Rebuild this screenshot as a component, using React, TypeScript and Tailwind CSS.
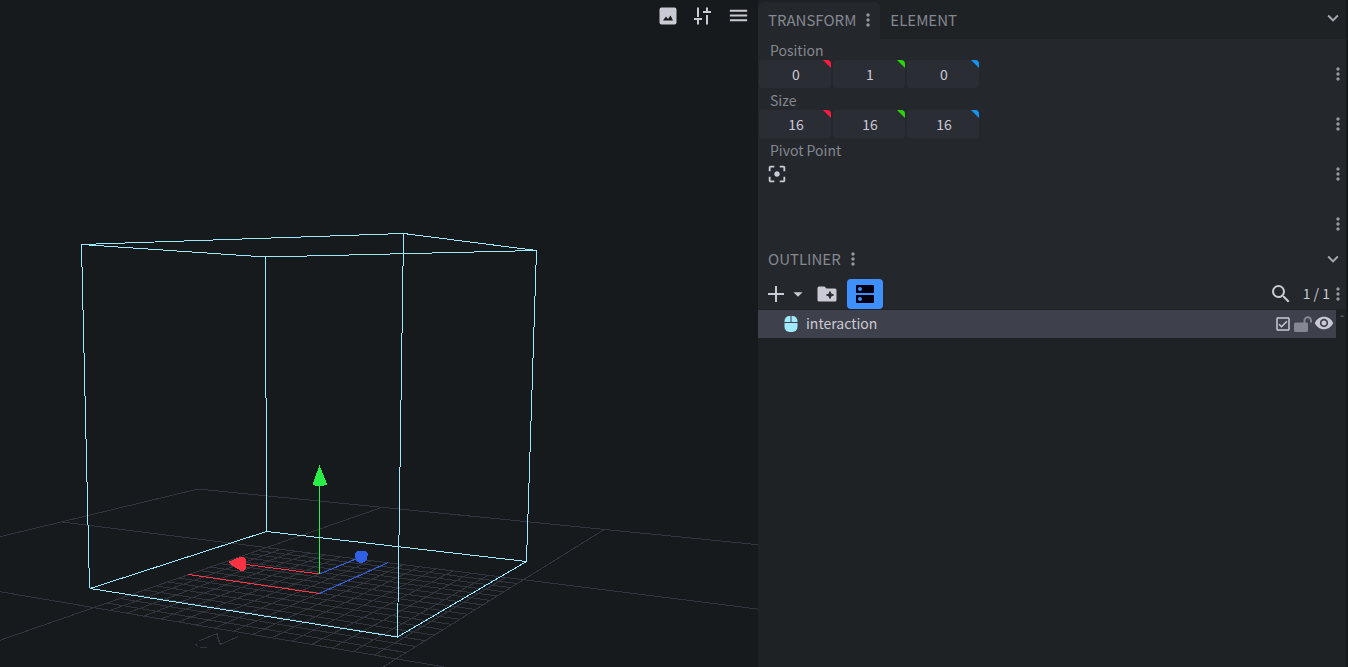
import { useState } from "react";
import type { ReactNode } from "react";
import {
  MdArrowDropDown,
  MdArrowDropUp,
  MdDns,
  MdFilterCenterFocus,
  MdMenu,
  MdMoreVert,
  MdOutlineCheckBox,
  MdSearch,
  MdVisibility,
  MdExpandMore,
} from "react-icons/md";

type Point = [number, number];

/* Projects ground coordinates on screen: one unit is one 16x16 block,
   with the centre block running from 0 to 1 on both axes. */
const A = 302.2, B = -291.7, D = -50.9, E = -91.3, G = -0.1725, H = -0.3011;
function project(u: number, v: number): Point {
  const s = (u + 1) / 2;
  const t = (v + 1) / 2;
  const w = 1 + G * s + H * t;
  return [(198 + A * s + B * t) / w, (489 + D * s + E * t) / w];
}

function line(a: Point, b: Point) {
  const r = a.concat(b).map((n) => Math.round(n * 10) / 10);
  return `M${r[0]} ${r[1]}L${r[2]} ${r[3]}`;
}

const steps = Array.from({ length: 17 }, (_, i) => i / 16);
const fineGrid = steps
  .map((k) => line(project(k, 0), project(k, 1)) + line(project(0, k), project(1, k)))
  .join("");
const blockGrid = [-1, 0, 1, 2]
  .map((k) => line(project(k, -1), project(k, 2)) + line(project(-1, k), project(2, k)))
  .join("");

function Viewport() {
  return (
    <svg
      viewBox="0 0 758 667"
      preserveAspectRatio="xMidYMid slice"
      className="block h-full w-full"
      fill="none"
      shapeRendering="crispEdges"
      role="img"
      aria-label="3D preview"
    >
      <g stroke="#33353e">
        <path d={blockGrid} />
        <path d={fineGrid} />
        <path d="M199 641L217 633.5L220.500 644.500L238 636.500M216.500 633.500L219.500 644M195.500 644L198.500 647.500M200 647.500H207" />
      </g>
      <g stroke="#ff3244">
        <path d="M319.500 593.500L188.500 574.500" />
        <path d="M319.500 574L246 564.500" />
      </g>
      <g stroke="#3060e8">
        <path d="M319.500 593.500L388.500 562.500" />
        <path d="M319.500 574L356 559" />
      </g>
      <path d="M319.500 574V486" stroke="#28ee48" />
      <path d="M319.500 465L326.500 483V485L322 486H317L313 485V483Z" fill="#28ee48" />
      <path d="M228 562L240 557H244L246 560V568L243 571H241L230 564Z" fill="#ff3244" />
      <path d="M357 551H365L368 553L367 559L364 562L361 563L357 562L355 557V553Z" fill="#3060e8" />
      <path
        stroke="#9beaff"
        d="M81.500 244.500L403.500 233.500L536.500 250.500L265.500 257ZM90 588.500L266.500 531.500L526.500 561.500L397.500 637ZM81.500 244.500L89.500 588.500M403.500 233.500L397.500 637M536.500 250.500L526.500 561.500M265.500 257L266.500 531.500"
      />
    </svg>
  );
}

function ImageIcon() {
  return (
    <svg viewBox="0 0 18 18" className="size-[18px]" aria-hidden="true">
      <rect x="0.500" y="0.500" width="17" height="17" rx="2" fill="currentColor" />
      <path d="M4 13.500L7 9.500L9 12L11.500 8.500L14 13.500Z" fill="#171a1d" />
    </svg>
  );
}

function TuneIcon() {
  return (
    <svg viewBox="0 0 18 18" className="size-[18px]" fill="none" stroke="currentColor" strokeWidth="2" aria-hidden="true">
      <path d="M5 0.500V10M1 12H9M5 12V17.500M14 0.500V5M10 5H18M14 8V17.500" />
    </svg>
  );
}

function FolderIcon() {
  return (
    <svg viewBox="0 0 20 16" className="h-4 w-5" aria-hidden="true">
      <path d="M2 0.500H7.500L9.500 2.500H18Q19.500 2.500 19.500 4V14Q19.500 15.500 18 15.500H2Q0.500 15.500 0.500 14V2Q0.500 0.500 2 0.500Z" fill="currentColor" />
      <path d="M13 5.500L14 8L16.500 9L14 10L13 12.500L12 10L9.500 9L12 8Z" fill="#24272b" stroke="#24272b" />
    </svg>
  );
}

function MouseIcon() {
  return (
    <svg viewBox="0 0 14 18" className="h-[18px] w-3.5" aria-hidden="true">
      <rect x="0.500" y="1" width="13" height="16" rx="5" fill="#a0eaff" />
      <path d="M0 7.500H14M7 1V7" stroke="#3e404b" />
    </svg>
  );
}

function UnlockIcon() {
  return (
    <svg viewBox="0 0 18 17" className="h-[17px] w-[18px]" aria-hidden="true">
      <rect x="0" y="6.500" width="14" height="9.500" rx="1.500" fill="currentColor" />
      <path d="M10.500 8V4.500A3.200 3.200 0 0 1 17 4.500V6.500" fill="none" stroke="currentColor" strokeWidth="2" />
    </svg>
  );
}

function MenuDots({ label }: { label: string }) {
  return (
    <button aria-label={label} className="flex h-7 w-4 items-center justify-center text-[#96989d]">
      <MdMoreVert size={20} className="shrink-0" />
    </button>
  );
}

const axes = [
  { name: "X", corner: "bg-[#ff1a40]" },
  { name: "Y", corner: "bg-[#2ad30a]" },
  { name: "Z", corner: "bg-[#1496f0]" },
];

function VectorInputs({ label, initial }: { label: string; initial: string[] }) {
  const [values, setValues] = useState(initial);
  return (
    <div className="flex gap-0.5">
      {axes.map((axis, i) => (
        <label key={axis.name} className="relative block h-7 w-18 overflow-hidden rounded bg-[#2b2d35]">
          <input
            aria-label={`${label} ${axis.name}`}
            value={values[i]}
            onChange={(e) => setValues(values.map((v, j) => (j === i ? e.target.value : v)))}
            className="h-full w-full bg-transparent pl-0.5 text-center leading-7 text-[#cacad4] outline-none"
          />
          <span className={`absolute right-0 top-0 size-2 [clip-path:polygon(0_0,100%_0,100%_100%)] ${axis.corner}`} />
        </label>
      ))}
    </div>
  );
}

function Row({ title, children }: { title?: string; children?: ReactNode }) {
  return (
    <div className="h-[50px]">
      <div className="h-5 pl-3 leading-5">{title}</div>
      <div className="flex items-center justify-between pl-px">
        <div>{children}</div>
        <MenuDots label={`${title ?? "Pivot"} options`} />
      </div>
    </div>
  );
}

export default function App() {
  return (
    <div className="flex h-screen overflow-hidden bg-[#171a1d] text-sm text-[#848891] [font-family:'Noto_Sans_CJK_SC','Noto_Sans',sans-serif]">
      <main className="relative min-w-0 flex-1">
        <Viewport />
        <div className="absolute right-2 top-1 flex items-center gap-4 text-[#cacad4]">
          <button aria-label="Background"><ImageIcon /></button>
          <button aria-label="View settings"><TuneIcon /></button>
          <button aria-label="Menu"><MdMenu size={23} /></button>
        </div>
      </main>

      <aside className="flex w-[590px] shrink-0 flex-col border-r-2 border-[#171a1d] bg-[#1e2224]">
        <header className="flex h-[39px] items-end justify-between text-[15px]">
          <div className="flex">
            <div className="flex h-[37px] items-center rounded-t-md bg-[#24272b] pb-0.5 pl-2.5 pr-1">
              <button>TRANSFORM</button>
              <div className="ml-1"><MenuDots label="Transform menu" /></div>
            </div>
            <button className="px-2.5 pb-0.5">ELEMENT</button>
          </div>
          <button aria-label="Collapse panel" className="mb-2.5 mr-0.5 text-[#a8a9b0]"><MdExpandMore size={22} /></button>
        </header>
        <section className="bg-[#24272b] pt-px">
          <Row title="Position"><VectorInputs label="Position" initial={["0", "1", "0"]} /></Row>
          <Row title="Size"><VectorInputs label="Size" initial={["16", "16", "16"]} /></Row>
          <Row title="Pivot Point">
            <button aria-label="Center pivot" className="block pl-[7px] text-[#cacad4]"><MdFilterCenterFocus size={22} /></button>
          </Row>
          <Row />
        </section>

        <section className="flex min-h-0 flex-1 flex-col">
          <header className="flex h-[39px] items-center justify-between bg-[#24272b] pb-0.5 pl-2.5 pr-0.5 text-[15px]">
            <div className="flex items-center gap-1"><h2>OUTLINER</h2><MenuDots label="Outliner menu" /></div>
            <button aria-label="Collapse outliner" className="text-[#a8a9b0]"><MdExpandMore size={22} /></button>
          </header>
          <div className="flex h-[31px] items-center justify-between border-b border-[#1e2224] bg-[#24272b] text-[#cacad4]">
            <div className="flex items-center pl-[9px]">
              <button aria-label="Add element">
                <svg viewBox="0 0 18 18" className="size-[18px]" stroke="currentColor" strokeWidth="2" aria-hidden="true"><path d="M9 1V17M1 9H17" /></svg>
              </button>
              <button aria-label="More elements" className="ml-0.5"><MdArrowDropDown size={22} /></button>
              <button aria-label="Add group" className="ml-2"><FolderIcon /></button>
              <button aria-label="Toggle options" aria-pressed="true" className="ml-2.5 flex h-[30px] w-9 items-center justify-center rounded bg-[#3e90ff] text-[#000010]"><MdDns size={24} /></button>
            </div>
            <div className="flex items-center">
              <button aria-label="Search"><MdSearch size={24} /></button>
              <span className="ml-2.5 pb-0.5">1 / 1</span>
              <MenuDots label="Outliner options" />
            </div>
          </div>
          <div className="flex">
            <div className="flex h-7 flex-1 items-center justify-between bg-[#3e404b] pl-[26px] pr-0.5 text-[#cacad4]">
              <div className="flex items-center gap-2"><MouseIcon /><span className="pb-0.5">interaction</span></div>
              <div className="flex items-center gap-0.5">
                <button aria-label="Export"><MdOutlineCheckBox size={18} /></button>
                <button aria-label="Lock" className="text-[#848891]"><UnlockIcon /></button>
                <button aria-label="Visibility" className="pb-0.5"><MdVisibility size={20} /></button>
              </div>
            </div>
            <div className="w-2.5 text-[#4a4d55]"><MdArrowDropUp size={12} /></div>
          </div>
        </section>
      </aside>
    </div>
  );
}
